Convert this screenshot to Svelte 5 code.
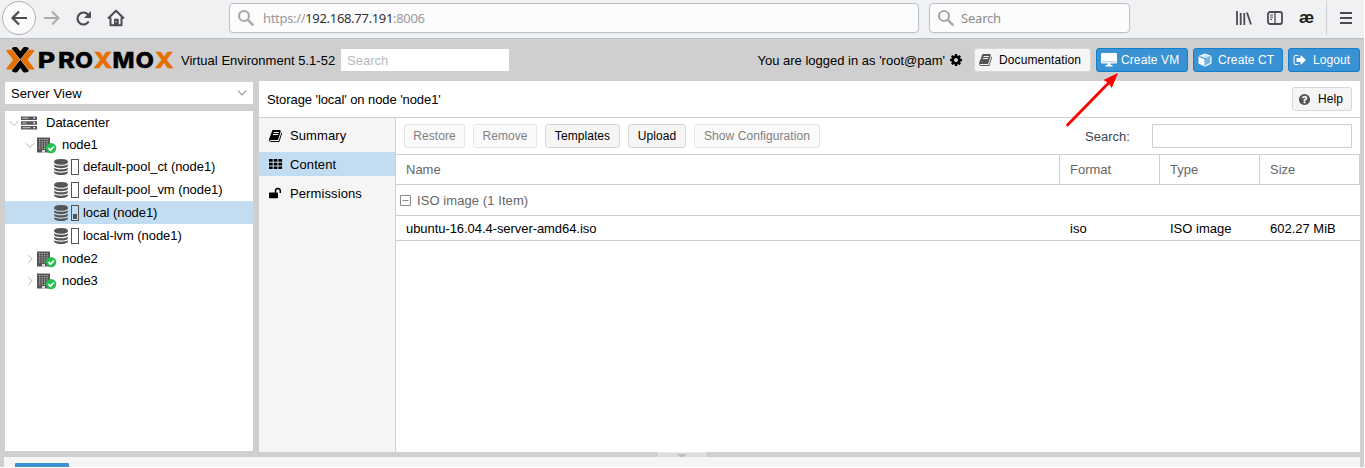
<script>
  const book = 'M1639 478q40 57 18 129l-275 906q-19 64-76.500 107.500t-122.500 43.500h-923q-77 0-148.500-53.500t-99.500-131.500q-24-67-2-127 0-4 3-27t4-37q1-8-3-21.500t-3-19.500q2-11 8-21t16.500-23.500 16.500-23.500q23-38 45-91.500t30-91.500q3-10 .5-30t-.5-28q3-11 17-28t17-23q21-36 42-92t25-90q1-9-2.500-32t.5-28q4-13 22-30.500t22-22.500q19-26 42.500-84.500t27.500-96.500q1-8-3-25.500t-2-26.500q2-8 9-18t18-23 17-21q8-12 16.500-30.500t15-35 16-36 19.500-32 26.500-23.500 36-11.500 47.500 5.500l-1 3q38-9 51-9h761q74 0 114 56t18 130l-274 906q-36 119-71.500 153.500t-128.500 34.500h-869q-27 0-38 15-11 16-1 43 24 70 144 70h923q29 0 56-15.500t35-41.500l300-987q7-22 5-57 38 15 59 43zm-1064 2q-4 13 2 22.500t20 9.500h608q13 0 25.500-9.500t16.500-22.500l21-64q4-13-2-22.500t-20-9.500h-608q-13 0-25.500 9.500t-16.500 22.500zm-83 256q-4 13 2 22.500t20 9.500h608q13 0 25.500-9.500t16.500-22.500l21-64q4-13-2-22.500t-20-9.500h-608q-13 0-25.500 9.500t-16.500 22.500z';
  const cog = 'M1152 896q0-106-75-181t-181-75-181 75-75 181 75 181 181 75 181-75 75-181zm512-109v222q0 12-8 23t-20 13l-185 28q-19 54-39 91 35 50 107 138 10 12 10 25t-9 23q-27 37-99 108t-94 71q-12 0-26-9l-138-108q-44 23-91 38-16 136-29 186-7 28-36 28h-222q-14 0-24.500-8.500t-11.500-21.500l-28-184q-49-16-90-37l-141 107q-10 9-25 9-14 0-25-11-126-114-165-168-7-10-7-23 0-12 8-23 15-21 51-66.500t54-70.500q-27-50-41-99l-183-27q-13-2-21-12.500t-8-23.500v-222q0-12 8-23t19-13l186-28q14-46 39-92-40-57-107-138-10-12-10-24 0-10 9-23 26-36 98.500-107.500t94.500-71.500q13 0 26 10l138 107q44-23 91-38 16-136 29-186 7-28 36-28h222q14 0 24.500 8.500t11.500 21.500l28 184q49 16 90 37l142-107q9-9 24-9 13 0 25 10 129 119 165 170 7 8 7 22 0 12-8 23-15 21-51 66.500t-54 70.500q26 50 41 98l183 28q13 2 21 12.500t8 23.500z';
  const database = 'M896 768q237 0 443-43t325-127v170q0 69-103 128t-280 93.500-385 34.500-385-34.500-280-93.500-103-128v-170q119 84 325 127t443 43zm0 768q237 0 443-43t325-127v170q0 69-103 128t-280 93.500-385 34.500-385-34.500-280-93.500-103-128v-170q119 84 325 127t443 43zm0-384q237 0 443-43t325-127v170q0 69-103 128t-280 93.500-385 34.500-385-34.500-280-93.500-103-128v-170q119 84 325 127t443 43zm0-1152q208 0 385 34.500t280 93.500 103 128v128q0 69-103 128t-280 93.500-385 34.500-385-34.500-280-93.500-103-128v-128q0-69 103-128t280-93.500 385-34.500z';
  const question = 'M1024 1376v-192q0-14-9-23t-23-9h-192q-14 0-23 9t-9 23v192q0 14 9 23t23 9h192q14 0 23-9t9-23zm256-672q0-88-55.500-163t-138.500-116-170-41q-243 0-371 213-15 24 8 42l132 100q7 6 19 6 16 0 25-12 53-68 86-92 34-24 86-24 48 0 85.500 26t37.500 59q0 38-20 61t-68 45q-63 28-115.500 86.500t-52.500 125.500v36q0 14 9 23t23 9h192q14 0 23-9t9-23q0-19 21.500-49.500t54.500-49.500q32-18 49-28.500t46-35 44.500-48 28-60.500 12.500-81zm384 192q0 209-103 385.500t-279.500 279.500-385.500 103-385.500-103-279.500-279.500-103-385.500 103-385.500 279.500-279.500 385.500-103 385.500 103 279.500 279.500 103 385.500z';
  const signOut = 'M704 1440q0 4 1 20t.5 26.500-3 23.500-10 19.500-20.500 6.500h-320q-119 0-203.500-84.500t-84.500-203.500v-704q0-119 84.500-203.500t203.500-84.500h320q13 0 22.500 9.500t9.500 22.500q0 4 1 20t.5 26.500-3 23.500-10 19.500-20.500 6.500h-320q-66 0-113 47t-47 113v704q0 66 47 113t113 47h312l11.500 1 11.500 3 8 5.500 7 9 2 13.500zm928-544q0 26-19 45l-544 544q-19 19-45 19t-45-19-19-45v-288h-448q-26 0-45-19t-19-45v-384q0-26 19-45t45-19h448v-288q0-26 19-45t45-19 45 19l544 544q19 19 19 45z';

  const tree = [
    { kind: 'root', text: 'Datacenter', open: true, short: true },
    { kind: 'node', text: 'node1', open: true, short: true },
    { kind: 'store', text: 'default-pool_ct (node1)', fill: 0 },
    { kind: 'store', text: 'default-pool_vm (node1)', fill: 0 },
    { kind: 'store', text: 'local (node1)', fill: 5, selected: true },
    { kind: 'store', text: 'local-lvm (node1)', fill: 0 },
    { kind: 'node', text: 'node2' },
    { kind: 'node', text: 'node3', short: true }
  ];
  const windowsRows = [0, 1, 2, 3, 4];
  const windowsCols = [0, 1, 2, 3];
</script>

{#snippet fa(d, size)}
  <svg width={size} height={size} viewBox="0 0 1792 1792" fill="currentColor"><path {d} /></svg>
{/snippet}

{#snippet magnifier()}
  <svg width="18" height="18" viewBox="0 0 18 18" fill="none" stroke="#aaa" stroke-width="2.2"><circle cx="7" cy="7" r="5" /><path d="M10.600 10.600L16.300 16.300" stroke-width="2.600" /></svg>
{/snippet}

<div class="screen">
  <header class="browser">
    <div class="nav">
      <span class="back"><svg width="18" height="18" viewBox="0 0 18 18" fill="none" stroke="#4b4c50" stroke-width="2.200"><path d="M17 9H3M9 2.500L2.500 9L9 15.500" /></svg></span>
      <svg class="fwd" width="18" height="18" viewBox="0 0 18 18" fill="none" stroke="#aaabad" stroke-width="2"><path d="M1 9H15M9 2.500L15.500 9L9 15.500" /></svg>
      <svg class="reload" width="17" height="17" viewBox="0 0 17 17" fill="none" stroke="#4b4c50" stroke-width="2.200"><path d="M13.700 11.500A6 6 0 1 1 13 4.500" /><path d="M16 1v7H9z" fill="#4b4c50" stroke="none" /></svg>
      <svg class="home" width="18" height="18" viewBox="0 0 18 18" fill="none" stroke="#4b4c50" stroke-width="2"><path d="M1 9.500L9 1.800L17 9.500M3.500 8.500V16.200H14.500V8.500" stroke-linejoin="round" /><path d="M7.500 16V10.200H11.200V16" fill="#4b4c50" stroke-width="1" /><path d="M9 12v1.500" stroke="#eee" stroke-width="1" /></svg>
    </div>
    <div class="field url">{@render magnifier()}<span><i>https://</i><b>192.168.77.191</b><i>:8006</i></span></div>
    <div class="field find">{@render magnifier()}<span>Search</span></div>
    <div class="tools">
      <svg width="16" height="14" viewBox="0 0 16 14" fill="none" stroke="#4b4c50" stroke-width="1.800"><path d="M1 0v14M4.700 2v12M8.300 2v12M11 1.500L15 13.500" /></svg>
      <svg class="sidebar" width="16" height="14" viewBox="0 0 16 14" fill="none" stroke="#4b4c50"><rect x="1" y="1" width="14" height="12" rx="2" stroke-width="1.800" /><path d="M8 1v12" stroke-width="1.300" /><path d="M3 4h3M3 6.200h3M3 8.400h2" /></svg>
      <span class="ae">æ</span>
      <svg class="menu" width="12" height="12" viewBox="0 0 12 12" stroke="#4b4c50" stroke-width="2"><path d="M0 1h12M0 6h12M0 11h12" /></svg>
    </div>
  </header>

  <div class="top">
    <svg class="logo" width="169" height="28" viewBox="0 0 169 28">
      <path d="M1 4.500Q2.500 3.800 4 3.800H6Q7.500 3.800 8.500 5L15 13.700L8.500 22.400Q7.500 23.600 6 23.600H4Q2.500 23.600 1 22.900L8 13.700ZM29.600 4.500Q28 3.800 26.600 3.800H24.600Q23 3.800 22 5L15.600 13.700L22 22.400Q23 23.600 24.600 23.600H26.600Q28 23.600 29.600 22.900L22.600 13.700Z" fill="#e57000" />
      <path d="M6.600 2.300Q8 1 10 1H11Q12 1 12.800 2L15.300 5.300L17.800 2Q18.600 1 19.600 1H20.600Q22.600 1 24 2.300L15.300 13.600ZM6.600 25.100Q8 26.400 10 26.400H11Q12 26.400 12.800 25.400L15.300 22.100L17.800 25.400Q18.600 26.400 19.600 26.400H20.600Q22.600 26.400 24 25.100L15.300 13.800Z" fill="#000" stroke="#d8d4d0" stroke-width=".9" paint-order="stroke" />
      <g class="word">
        <text x="32.800" y="21.600" textLength="17.500" lengthAdjust="spacingAndGlyphs">P</text>
        <text x="53" y="21.600" textLength="17" lengthAdjust="spacingAndGlyphs">R</text>
        <text x="70" y="21.600" textLength="18" lengthAdjust="spacingAndGlyphs">O</text>
        <text class="orange" x="88.500" y="21.600" textLength="19" lengthAdjust="spacingAndGlyphs">X</text>
        <text x="107.500" y="21.600" textLength="22" lengthAdjust="spacingAndGlyphs">M</text>
        <text x="130.500" y="21.600" textLength="18.500" lengthAdjust="spacingAndGlyphs">O</text>
        <text class="orange" x="149.700" y="21.600" textLength="19" lengthAdjust="spacingAndGlyphs">X</text>
      </g>
    </svg>
    <span class="version">Virtual Environment 5.1-52</span>
    <div class="quick">Search</div>
    <div class="user"><span>You are logged in as 'root@pam'</span>{@render fa(cog, 14)}</div>
    <button class="btn docs">{@render fa(book, 14)}<span>Documentation</span></button>
    <button class="btn blue vm"><svg width="16" height="14" viewBox="0 0 16 14" fill="#fff"><path d="M1 0h14q1 0 1 1v8.500q0 1-1 1H1q-1 0-1-1V1q0-1 1-1zM6.500 10h3v2h2v1.500h-7V12h2z" /><path d="M1 8.800h14" stroke="#3892d4" stroke-width=".5" /></svg><span>Create VM</span></button>
    <button class="btn blue ct"><svg width="14" height="14" viewBox="0 0 14 14"><path d="M7 .5L13.500 3V10.500L7 13.800L.5 10.500V3Z" fill="#fff" /><path d="M1.700 3.600L7 5.800L12.300 3.600L7 1.700Z" fill="#3892d4" opacity=".25" /><path d="M1.200 3.500L7 5.900V12.800M7 5.900L12.800 3.500" stroke="#3892d4" fill="none" /><path d="M7.500 6.500L12.300 4.500V9.800L7.500 12.300Z" fill="#3892d4" opacity=".7" /></svg><span>Create CT</span></button>
    <button class="btn blue out">{@render fa(signOut, 14)}<span>Logout</span></button>
  </div>

  <main class="body">
    <aside class="left">
      <div class="combo"><span>Server View</span><svg width="10" height="8" viewBox="0 0 10 8" fill="none" stroke="#aaa" stroke-width="1.200"><path d="M1 1.500L5 6L9 1.500" /></svg></div>
      <div class="tree">
        {#each tree as row}
          <div class="row {row.kind}" class:short={row.short} class:selected={row.selected}>
            {#if row.kind !== 'store'}
              <svg class="caret" width="10" height="10" viewBox="0 0 10 10" fill="none" stroke="#b5b5b5">
                {#if row.open}<path d="M.8 3.200L5 7.500L9.200 3.200" />{:else}<path d="M3 .8L7.200 5L3 9.200" />{/if}
              </svg>
            {/if}
            {#if row.kind === 'root'}
              <svg width="16" height="14" viewBox="0 0 16 14"><path d="M0 .5h16v3.500H0zM0 5.200h16v3.500H0zM0 9.900h16v3.500H0z" fill="#555" /><path d="M1.500 2.200h6M1.500 7h4M1.500 11.700h8" stroke="#ccc" /><path d="M12.500 2.200h1.500M12.500 7h1.500M12.500 11.700h1.500" stroke="#fff" stroke-width="1.300" /></svg>
            {:else if row.kind === 'node'}
              <svg width="20" height="18" viewBox="0 0 20 18"><path d="M0 1.500h13v15H0z" fill="#555" />
                {#each windowsRows as y}{#each windowsCols as x}<rect x={2 + x * 2.5} y={3 + y * 2.2} width="1.200" height="1.100" fill="#bbb" />{/each}{/each}
                <rect x="5" y="14" width="3" height="2.500" fill="#ddd" />
                <circle cx="14.100" cy="12.100" r="5.200" fill="#21bf4b" /><path d="M11.500 12.200L13.500 14.200L17 10.500" fill="none" stroke="#fff" stroke-width="1.800" /></svg>
            {:else}
              {@render fa(database, 16)}
              <span class="gauge"><span style="height:{row.fill}px"></span></span>
            {/if}
            <span class="label">{row.text}</span>
          </div>
        {/each}
      </div>
    </aside>

    <section class="panel">
      <div class="title"><span>Storage 'local' on node 'node1'</span><button class="btn help">{@render fa(question, 13)}<span>Help</span></button></div>
      <div class="inner">
        <nav class="tabs">
          <div class="tab">{@render fa(book, 14)}<span>Summary</span></div>
          <div class="tab active"><svg width="14" height="14" viewBox="0 0 14 14"><path d="M0 1h3.700v2.700H0zM4.700 1h3.700v2.700H4.700zM9.400 1h3.700v2.700H9.400zM0 4.700h3.700v2.700H0zM4.700 4.700h3.700v2.700H4.700zM9.400 4.700h3.700v2.700H9.400zM0 8.400h3.700v2.700H0zM4.700 8.400h3.700v2.700H4.700zM9.400 8.400h3.700v2.700H9.400z" /></svg><span>Content</span></div>
          <div class="tab"><svg width="14" height="14" viewBox="0 0 14 14"><rect x="0" y="5.500" width="9" height="5.700" rx=".7" /><path d="M6.500 6V3.800a2.400 2.400 0 0 1 4.800 0V6" fill="none" stroke="#000" stroke-width="1.500" /></svg><span>Permissions</span></div>
        </nav>
        <div class="content">
          <div class="toolbar">
            <button class="btn off" style="width:61px">Restore</button>
            <button class="btn off" style="width:64px">Remove</button>
            <button class="btn" style="width:75px">Templates</button>
            <button class="btn" style="width:58px">Upload</button>
            <button class="btn off" style="width:126px">Show Configuration</button>
            <span class="slabel">Search:</span><div class="sbox"></div>
          </div>
          <div class="grid head"><span>Name</span><span>Format</span><span>Type</span><span>Size</span></div>
          <div class="group"><svg width="11" height="11" viewBox="0 0 11 11" fill="none" stroke="#8a8a8a"><path d="M.5.5h10v10H.5zM2.500 5.500h6" /></svg><span>ISO image (1 Item)</span></div>
          <div class="grid item"><span class="iso">ubuntu-16.04.4-server-amd64.iso</span><span>iso</span><span>ISO image</span><span>602.27 MiB</span></div>
        </div>
      </div>
    </section>
  </main>
  <div class="splitter"><span><svg width="10" height="4" viewBox="0 0 10 4"><path d="M0 0h10L5 4z" fill="#bbb" /></svg></span></div>
  <footer><div class="task"></div></footer>

  <svg class="arrow" width="54" height="56" viewBox="0 0 54 56"><path d="M2.500 52L46 7.500" stroke="#f00" stroke-width="2.800" stroke-linecap="round" /><path d="M53 0L38.500 7L43.500 10L46.800 15Z" fill="#f00" /></svg>
</div>

<style>
  :global(body) { background: #fff; overflow: hidden; }
  .screen, .screen * { box-sizing: border-box; }
  .screen { position: relative; width: 1364px; height: 467px; overflow: hidden; background: #cfcfcf; display: flex; flex-direction: column; font: 13px/16px "Liberation Sans", Arial, sans-serif; color: #000; white-space: nowrap; }
  svg { display: block; flex: none; }
  .browser { height: 39px; flex: none; background: #f0f1f3; border-bottom: 1px solid #b9bfc5; display: flex; align-items: flex-start; font: 13px/18px "Noto Sans", sans-serif; }
  .nav { width: 229px; height: 36px; display: flex; align-items: center; padding-left: 2px; }
  .back { width: 34px; height: 34px; border-radius: 50%; border: 1px solid #aeb0b3; background: #fbfbfb; display: grid; place-items: center; }
  .fwd { margin-left: 7px; }
  .reload { margin-left: 14px; }
  .home { margin-left: 15px; }
  .field { height: 30px; margin-top: 3px; border: 1px solid #b9c1c9; border-radius: 4px; background: #fcfcfc; display: flex; align-items: center; padding-left: 7px; gap: 8px; color: #8b8c8f; box-shadow: 0 1px 2px #0000000a; }
  .url { width: 690px; letter-spacing: -.32px; }
  .find { width: 201px; margin-left: 10px; gap: 6px; letter-spacing: -.2px; }
  .field i { font-style: normal; color: #999a9c; }
  .field b { font-weight: normal; color: #333; }
  .tools { position: relative; height: 36px; display: flex; align-items: center; margin-left: 106px; }
  .sidebar { margin-left: 15px; }
  .ae { width: 16px; margin-left: 16px; font: bold 17px/18px "Liberation Sans", sans-serif; color: #1c1c1c; }
  .menu { margin-left: 25px; }
  .ae::after { content: ""; position: absolute; left: 90px; top: 1px; height: 34px; border-left: 1px solid #cfd0d2; }

  .top { height: 42px; flex: none; display: flex; align-items: center; }
  .logo { margin-left: 5px; }
  .word text { font: 800 21.500px Inter, sans-serif; stroke: #000; stroke-width: .3px; }
  .word .orange { fill: #e57000; stroke: #e57000; }
  .version { width: 160px; margin-left: 7px; padding-top: 1px; letter-spacing: .02px; }
  .quick { width: 168px; height: 22px; background: #fff; color: #b9b9b9; padding: 4px 6px; line-height: 15px; }
  .user { width: 465px; display: flex; justify-content: flex-end; align-items: center; gap: 4px; padding-right: 11px; }
  .user span { padding-top: 1px; }
  .btn { height: 24px; border: 1px solid #d8d8d8; border-radius: 3px; background: #f5f5f5; font: 12px/16px "Liberation Sans", Arial, sans-serif; color: #000; padding: 0; margin: 0; display: flex; align-items: center; justify-content: center; letter-spacing: .1px; flex: none; }
  .docs { width: 117px; gap: 6px; justify-content: flex-start; padding-left: 4px; }
  .docs svg, .help svg { color: #555; }
  .blue { background: #3892d4; border-color: #157fcc; color: #fff; justify-content: flex-start; margin-left: 5px; padding-left: 4px; }
  .vm { width: 92px; gap: 4px; }
  .ct { width: 90px; gap: 6px; }
  .out { width: 72px; gap: 6px; }

  .body { height: 371px; flex: none; display: flex; padding-left: 5px; }
  .left { width: 248px; margin: 1px 6px 1px 0; display: flex; flex-direction: column; gap: 7px; }
  .combo { height: 22px; background: #fff; display: flex; justify-content: space-between; align-items: center; padding: 0 6px; letter-spacing: .08px; }
  .combo span { padding-top: 2px; }
  .tree { height: 340px; background: #fff; }
  .row { height: 23px; display: flex; align-items: center; }
  .short { height: 22px; }
  .short .caret, .short .caret ~ * { position: relative; top: 1px; }
  .row:last-child .caret, .row:last-child .caret ~ * { top: 0; }
  .selected { background: #c2ddf2; }
  .caret { margin-right: 2px; }
  .root { padding-left: 4px; }
  .root .label { margin-left: 9px; }
  .node { padding-left: 20px; }
  .node .label { margin-left: 5px; letter-spacing: -.1px; }
  .store { padding-left: 48px; color: #555; letter-spacing: -.06px; }
  .gauge { width: 8px; height: 16px; border: 1px solid #555; padding: 1px; margin: 0 4px 0 2px; display: flex; align-items: flex-end; background: #fff; }
  .selected .gauge { background: none; }
  .gauge span { width: 4px; background: #555; }
  .label { color: #000; }
  .panel { width: 1101px; background: #fff; display: flex; flex-direction: column; }
  .title { height: 37px; border-bottom: 1px solid #cfcfcf; display: flex; align-items: center; justify-content: space-between; padding: 0 8px; letter-spacing: -.08px; }
  .title > span { padding-top: 2px; }
  .help { width: 60px; gap: 7px; padding-right: 3px; }
  .inner { flex: 1; display: flex; }
  .tabs { width: 137px; background: #f5f5f5; border-right: 1px solid #cfcfcf; padding-top: 5px; display: flex; flex-direction: column; gap: 5px; }
  .tab { height: 24px; display: flex; align-items: center; padding-left: 10px; gap: 7px; letter-spacing: .1px; padding-top: 1px; }
  .active { background: #c2ddf2; }
  .content { flex: 1; }
  .toolbar { height: 37px; border-bottom: 1px solid #cfcfcf; display: flex; align-items: center; gap: 8px; padding: 0 8px; }
  .toolbar .btn { letter-spacing: .07px; }
  .off { color: #808080; background: #fafafa; border-color: #e6e6e6; }
  .slabel { margin-left: auto; width: 59px; padding-left: 0; margin-right: 0; color: #3b4754; padding-top: 1px; }
  .sbox { width: 200px; height: 24px; border: 1px solid #cfcfcf; }
  .grid { display: grid; grid-template-columns: 664px 100px 100px 100px; align-items: center; border-bottom: 1px solid #cfcfcf; }
  .grid span { padding-left: 10px; }
  .head { height: 30px; color: #666; align-items: stretch; line-height: 29px; }
  .head span { border-right: 1px solid #cfcfcf; }
  .group { height: 31px; border-bottom: 1px solid #cfcfcf; display: flex; align-items: center; padding-left: 4px; gap: 6px; color: #666; letter-spacing: .08px; }
  .group span { padding-top: 1px; }
  .item { height: 25px; padding-top: 2px; }
  .iso { letter-spacing: -.06px; }
  .splitter { height: 5px; flex: none; display: flex; justify-content: center; }
  .splitter span { width: 48px; height: 5px; background: #ddd; border: 1px solid #e8e8e8; border-bottom: 0; display: flex; justify-content: center; padding-top: 1px; overflow: hidden; }
  footer { height: 10px; margin: 0 4px; background: #f5f5f5; padding: 6px 11px 0; }
  .task { width: 54px; height: 4px; background: #3892d4; border-radius: 1px 1px 0 0; }
  .arrow { position: absolute; left: 1065px; top: 73px; }
</style>
